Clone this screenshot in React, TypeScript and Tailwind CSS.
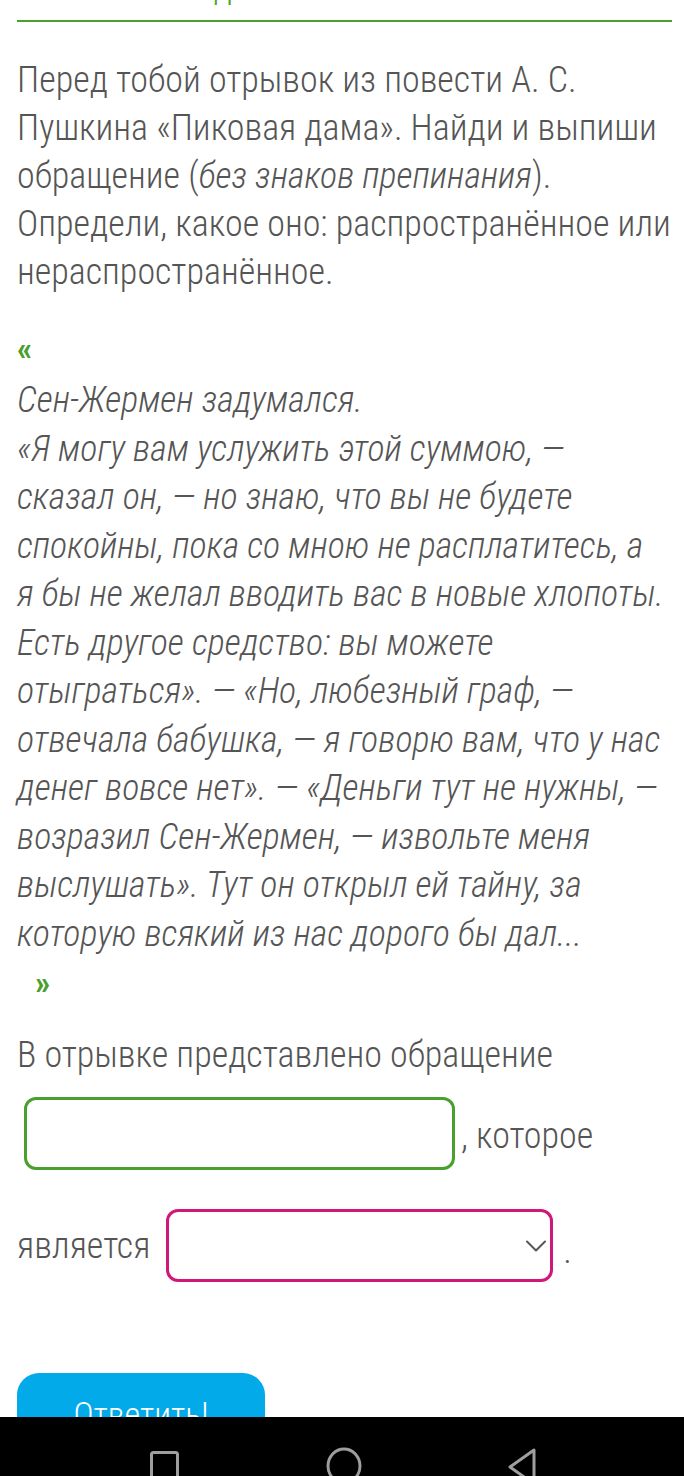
import { ChevronDown } from "lucide-react"

const font = {
  fontFamily: '"Roboto Condensed", "Liberation Sans Narrow", "DejaVu Sans Condensed", Roboto, sans-serif',
}

export default function App() {
  return (
    <div className="min-h-[1476px] bg-white flex flex-col" style={font}>
      <div className="flex-1 relative">
        {/* cut-off heading */}
        <div className="h-[20px] overflow-hidden relative">
          <div className="absolute left-[178px] bottom-[9px] text-[36px] leading-[48px] text-[#4aa02c] font-light [font-stretch:condensed]">
            Задание
          </div>
        </div>
        <div className="h-[2px] bg-[#4aa02c] ml-[17px] mr-[12px]" />

        <div className="px-[17px] text-[#555] font-light [font-stretch:condensed] text-[36px] leading-[48px]">
          <p className="mt-[34px] mr-[-12px]">
            Перед тобой отрывок из повести А. С. Пушкина «Пиковая дама». Найди и выпиши обращение (
            <i>без знаков препинания</i>). Определи, какое оно: распространённое или нераспространённое.
          </p>

          <div className="mt-[28px] text-[#4aa02c] font-bold text-[34px] leading-[48px]">«</div>
          <div className="italic mt-[4px] leading-[48.5px]">
            <p>Сен-Жермен задумался.</p>
            <p>
              «Я могу вам услужить этой суммою, — сказал он, — но знаю, что вы не будете спокойны, пока со мною не
              расплатитесь, а я бы не желал вводить вас в новые хлопоты. Есть другое средство: вы можете отыграться».
              — «Но, любезный граф, — отвечала бабушка, — я говорю вам, что у нас денег вовсе нет». — «Деньги тут не
              нужны, — возразил Сен-Жермен, — извольте меня выслушать». Тут он открыл ей тайну, за которую всякий из
              нас дорого бы дал...
            </p>
          </div>
          <div className="pl-[18px] text-[#4aa02c] font-bold text-[34px] leading-[48px]">»</div>

          <p className="mt-[25px]">В отрывке представлено обращение</p>

          <div className="mt-[18px] flex items-end gap-[6px]">
            <div className="ml-[7px] w-[431px] h-[73px] rounded-[12px] border-[3px] border-[#4aa02c] bg-white" />
            <span className="mb-[10px]">, которое</span>
          </div>

          <div className="mt-[39px] flex items-center gap-[16px]">
            <span>является</span>
            <div className="w-[387px] h-[73px] rounded-[12px] border-[3px] border-[#d0187a] bg-white flex items-center justify-end">
              <ChevronDown className="w-[36px] h-[36px] mr-[-4px] text-[#555]" strokeWidth={1.3} />
            </div>
            <span className="ml-[-6px] mt-[10px]">.</span>
          </div>

          <button className="mt-[91px] w-[248px] h-[82px] rounded-[22px] bg-[#03aaea] text-white text-[34px] font-light">
            Ответить!
          </button>
        </div>
      </div>

      {/* system navigation bar */}
      <div className="absolute top-[1417px] left-0 w-[684px] h-[59px] bg-black overflow-hidden">
        <svg width="684" height="59" viewBox="0 0 684 59" fill="none" stroke="#9e9e9e" strokeWidth="3">
          <rect x="151.5" y="35.5" width="26" height="40" rx="2" />
          <ellipse cx="344" cy="49" rx="16" ry="17" />
          <path d="M534 33 L510 50 L534 67 Z" strokeLinejoin="round" />
        </svg>
      </div>
    </div>
  )
}
